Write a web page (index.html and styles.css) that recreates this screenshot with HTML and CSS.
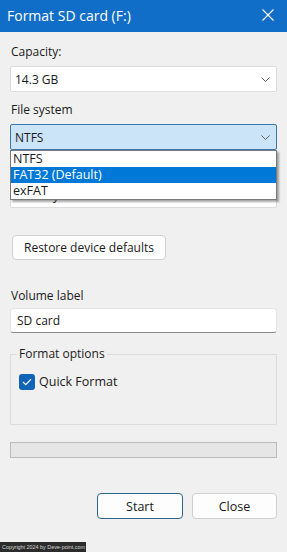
FILE: index.html
```html
<!DOCTYPE html>
<html lang="en">
<head>
  <meta charset="UTF-8" />
  <title>Format SD card (F:)</title>
  <link rel="stylesheet" href="styles.css">
</head>
<body>

  <div class="window">
    <header class="titlebar">
      <span class="title">Format SD card (F:)</span>
      <svg class="close-x" width="12" height="12" viewBox="0 0 12 12">
        <path d="M0.5 0.5 L11.5 11.5 M11.5 0.5 L0.5 11.5" stroke="#fff" stroke-width="1.1" fill="none"/>
      </svg>
    </header>

    <main class="content">
      <div class="group">
        <div class="field-label">Capacity:</div>
        <div class="select">
          <span>14.3 GB</span>
          <svg class="chev" width="9" height="5" viewBox="0 0 9 5"><path d="M0.5 0.5 L4.5 4.5 L8.5 0.5" stroke="#606060" fill="none"/></svg>
        </div>
      </div>

      <div class="group">
        <div class="field-label">File system</div>
        <div class="select-wrap">
          <div class="select open">
            <span>NTFS</span>
            <svg class="chev" width="9" height="5" viewBox="0 0 9 5"><path d="M0.5 0.5 L4.5 4.5 L8.5 0.5" stroke="#606060" fill="none"/></svg>
          </div>
          <ul class="dropdown">
            <li>NTFS</li>
            <li class="selected">FAT32 (Default)</li>
            <li>exFAT</li>
          </ul>
        </div>
      </div>

      <div class="group">
        <div class="field-label covered">Allocation unit size</div>
        <div class="select">
          <span>4096 bytes</span>
          <svg class="chev" width="9" height="5" viewBox="0 0 9 5"><path d="M0.5 0.5 L4.5 4.5 L8.5 0.5" stroke="#606060" fill="none"/></svg>
        </div>
      </div>

      <button class="btn restore">Restore device defaults</button>

      <div class="field-label volume">Volume label</div>
      <div class="textbox">SD card</div>

      <fieldset class="options">
        <legend>Format options</legend>
        <div class="check-row">
          <span class="checkbox">
            <svg width="10" height="8" viewBox="0 0 10 8"><path d="M1 4 L3.8 6.6 L9 1.2" stroke="#fff" stroke-width="1.2" fill="none"/></svg>
          </span>
          <span>Quick Format</span>
        </div>
      </fieldset>

      <div class="progress"></div>

      <div class="actions">
        <button class="btn primary">Start</button>
        <button class="btn close">Close</button>
      </div>
    </main>

    <div class="watermark">Copyright 2024 by Deve-point.com</div>
  </div>

</body>
</html>
```

FILE: styles.css
```css
/* Base */
* {
  box-sizing: border-box;
}

body {
  margin: 0;
  font-family: 'Open Sans', 'Noto Sans', sans-serif;
  font-size: 12px;
  color: #1a1a1a;
  background: #f0f0f0;
}

.window {
  position: relative;
  width: 287px;
  height: 552px;
  background: #f0f0f0;
  overflow: hidden;
}

/* Title bar */
.titlebar {
  height: 32px;
  background: #116ec8;
  color: #fff;
  display: flex;
  align-items: center;
  justify-content: space-between;
  padding: 0 13px 0 7px;
}

.title {
  font-size: 14px;
  line-height: 18px;
  margin-top: -1px;
}

.close-x {
  margin-top: -3px;
}

/* Content */
.content {
  padding: 12px 10px 0;
}

.group + .group {
  margin-top: 10px;
}

.field-label {
  line-height: 16px;
  margin-bottom: 6px;
  padding-left: 1px;
}

/* sits fully under the open list */
.field-label.covered {
  visibility: hidden;
}

.select {
  height: 26px;
  background: #fff;
  border: 1px solid #dcdcdc;
  border-radius: 2px;
  display: flex;
  align-items: center;
  justify-content: space-between;
  padding: 0 6px 0 4px;
}

.select.open {
  background: #cce4f7;
  border-color: #3d76a8;
}

.select-wrap {
  position: relative;
}

.dropdown {
  position: absolute;
  top: 100%;
  left: 0;
  right: 0;
  margin: 0;
  padding: 0;
  list-style: none;
  background: #fff;
  border: 1px solid #7a7a7a;
  box-shadow: 2px 2px 2px rgba(0, 0, 0, 0.35);
  z-index: 2;
}

.dropdown li {
  height: 16px;
  line-height: 16px;
  padding-left: 2px;
  font-size: 12.5px;
}

.dropdown li.selected {
  background: #0078d7;
  color: #fff;
}

/* Buttons */
.btn {
  font-family: inherit;
  font-size: 12px;
  color: #1a1a1a;
  background: #fdfdfd;
  border: 1px solid #d0d0d0;
  border-radius: 4px;
  height: 26px;
  padding: 0;
}

.restore {
  display: block;
  margin: 27px 0 0 2px;
  width: 154px;
  height: 25px;
}

.volume {
  margin-top: 28px;
  margin-bottom: 4px;
}

.textbox {
  height: 25px;
  background: #fff;
  border: 1px solid #e4e4e4;
  border-bottom-color: #8a8a8a;
  border-radius: 3px;
  padding: 0 6px;
  line-height: 23px;
}

/* Format options */
.options {
  margin: 13px 0 0;
  padding: 0 8px;
  border: 1px solid #dcdcdc;
  height: 79px;
}

.options legend {
  padding: 0 2px;
  margin-left: -2px;
  line-height: 16px;
}

.check-row {
  display: flex;
  align-items: center;
  gap: 4px;
  margin-top: 11px;
  font-size: 12.5px;
}

.checkbox {
  width: 16px;
  height: 16px;
  border-radius: 3px;
  background: #0f64b8;
  display: flex;
  align-items: center;
  justify-content: center;
}

.progress {
  margin-top: 17px;
  height: 16px;
  background: #e6e6e6;
  border: 1px solid #bcbcbc;
}

.actions {
  display: flex;
  justify-content: flex-end;
  gap: 9px;
  margin-top: 35px;
}

.actions .btn {
  width: 86px;
  font-size: 12.5px;
}

.actions .btn.close {
  width: 85px;
}

.btn.primary {
  border-color: #2a6687;
}

/* Watermark */
.watermark {
  position: absolute;
  left: 0;
  bottom: 0;
  width: 86px;
  height: 10px;
  background: #2b2b2b;
  color: #d8d8d8;
  font-family: 'Liberation Sans', sans-serif;
  font-size: 5.4px;
  line-height: 10px;
  padding-left: 2px;
  white-space: nowrap;
}
```
